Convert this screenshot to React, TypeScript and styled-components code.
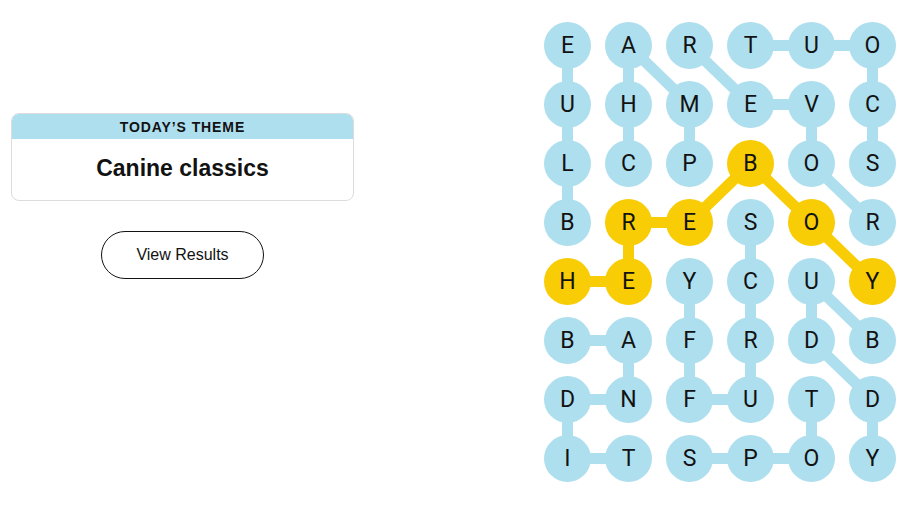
import React, { FC } from "react";
import styled, { createGlobalStyle } from "styled-components";

const BLUE = "#aedfee";
const YELLOW = "#f8cd05";
const COL_W = 61;
const ROW_H = 59;

const GlobalStyle = createGlobalStyle`
  html, body {
    margin: 0;
    padding: 0;
    background: #fff;
    font-family: "Liberation Sans", Arial, sans-serif;
    color: #121212;
  }
`;

const Page = styled.div`
  display: flex;
  width: 906px;
  height: 509px;
  box-sizing: border-box;
  padding: 16px 3px 0 11px;
`;

const LeftPanel = styled.div`
  width: 343px;
  padding-top: 97px;
  display: flex;
  flex-direction: column;
  align-items: center;
`;

const ThemeCard = styled.div`
  width: 100%;
  box-sizing: border-box;
  border: 1px solid #dcdcdc;
  border-radius: 8px;
  overflow: hidden;
`;

const ThemeHeader = styled.div`
  height: 25px;
  background: ${BLUE};
  display: flex;
  align-items: center;
  justify-content: center;
  font-size: 14px;
  font-weight: 600;
  letter-spacing: 0.9px;
  text-transform: uppercase;
`;

const ThemeTitle = styled.div`
  height: 61px;
  display: flex;
  align-items: center;
  justify-content: center;
  font-size: 23px;
  font-weight: 700;
  padding-bottom: 2px;
  box-sizing: border-box;
`;

const ResultsButton = styled.button`
  margin-top: 30px;
  width: 163px;
  height: 48px;
  border: 1px solid #121212;
  border-radius: 24px;
  background: #fff;
  font-family: "Liberation Sans", Arial, sans-serif;
  font-size: 16px;
  color: #121212;
  cursor: pointer;
`;

const Board = styled.div`
  position: relative;
  margin-left: auto;
  width: ${COL_W * 6}px;
  height: ${ROW_H * 8}px;
`;

const Lines = styled.svg`
  position: absolute;
  inset: 0;
`;

const Grid = styled.div`
  position: relative;
  display: grid;
  grid-template-columns: repeat(6, ${COL_W}px);
  grid-template-rows: repeat(8, ${ROW_H}px);
`;

const Cell = styled.div`
  display: flex;
  align-items: center;
  justify-content: center;
`;

const Letter = styled.div<{ $found: boolean }>`
  width: 47px;
  height: 47px;
  border-radius: 50%;
  background: ${({ $found }) => ($found ? YELLOW : BLUE)};
  display: flex;
  align-items: center;
  justify-content: center;
  font-family: Roboto, "Liberation Sans", sans-serif;
  font-size: 23px;
  color: #121212;
`;

const letters = [
  "EARTUO",
  "UHMEVC",
  "LCPBOS",
  "BRESOR",
  "HEYCUY",
  "BAFRDB",
  "DNFUTD",
  "ITSPOY",
];

type Pos = [number, number];

const words: { path: Pos[]; spangram?: boolean }[] = [
  { path: [[3, 0], [2, 0], [1, 0], [0, 0]] },
  { path: [[2, 1], [1, 1], [0, 1], [1, 2], [2, 2]] },
  { path: [[0, 2], [1, 3], [1, 4], [2, 4], [3, 5]] },
  { path: [[2, 5], [1, 5], [0, 5], [0, 4], [0, 3]] },
  { path: [[3, 3], [4, 3], [5, 3], [6, 3], [6, 2], [5, 2], [4, 2]] },
  { path: [[5, 5], [4, 4], [5, 4], [6, 5], [7, 5]] },
  { path: [[5, 0], [5, 1], [6, 1], [6, 0], [7, 0], [7, 1]] },
  { path: [[7, 2], [7, 3], [7, 4], [6, 4]] },
  { path: [[4, 0], [4, 1], [3, 1], [3, 2], [2, 3], [3, 4], [4, 5]], spangram: true },
];

const spangramCells = new Set(
  words.filter((w) => w.spangram).flatMap((w) => w.path.map(([r, c]) => `${r}-${c}`))
);

const cx = (c: number) => c * COL_W + COL_W / 2;
const cy = (r: number) => r * ROW_H + ROW_H / 2;

const App: FC = () => {
  return (
    <>
      <GlobalStyle />
      <Page>
        <LeftPanel>
          <ThemeCard>
            <ThemeHeader>Today’s Theme</ThemeHeader>
            <ThemeTitle>Canine classics</ThemeTitle>
          </ThemeCard>
          <ResultsButton>View Results</ResultsButton>
        </LeftPanel>
        <Board>
          <Lines width={COL_W * 6} height={ROW_H * 8}>
            {words.map((w, i) => (
              <polyline
                key={i}
                points={w.path.map(([r, c]) => `${cx(c)},${cy(r)}`).join(" ")}
                fill="none"
                stroke={w.spangram ? YELLOW : BLUE}
                strokeWidth={11}
                strokeLinejoin="round"
              />
            ))}
          </Lines>
          <Grid>
            {letters.map((row, r) =>
              row.split("").map((ch, c) => (
                <Cell key={`${r}-${c}`}>
                  <Letter $found={spangramCells.has(`${r}-${c}`)}>{ch}</Letter>
                </Cell>
              ))
            )}
          </Grid>
        </Board>
      </Page>
    </>
  );
};

export default App;
